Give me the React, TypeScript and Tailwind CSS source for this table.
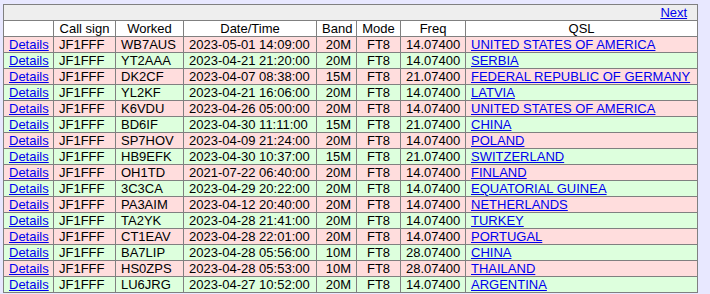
const rows: [string, string, string, string, string][] = [
  ["WB7AUS", "2023-05-01 14:09:00", "20M", "14.07400", "UNITED STATES OF AMERICA"],
  ["YT2AAA", "2023-04-21 21:20:00", "20M", "14.07400", "SERBIA"],
  ["DK2CF", "2023-04-07 08:38:00", "15M", "21.07400", "FEDERAL REPUBLIC OF GERMANY"],
  ["YL2KF", "2023-04-21 16:06:00", "20M", "14.07400", "LATVIA"],
  ["K6VDU", "2023-04-26 05:00:00", "20M", "14.07400", "UNITED STATES OF AMERICA"],
  ["BD6IF", "2023-04-30 11:11:00", "15M", "21.07400", "CHINA"],
  ["SP7HOV", "2023-04-09 21:24:00", "20M", "14.07400", "POLAND"],
  ["HB9EFK", "2023-04-30 10:37:00", "15M", "21.07400", "SWITZERLAND"],
  ["OH1TD", "2021-07-22 06:40:00", "20M", "14.07400", "FINLAND"],
  ["3C3CA", "2023-04-29 20:22:00", "20M", "14.07400", "EQUATORIAL GUINEA"],
  ["PA3AIM", "2023-04-12 20:40:00", "20M", "14.07400", "NETHERLANDS"],
  ["TA2YK", "2023-04-28 21:41:00", "20M", "14.07400", "TURKEY"],
  ["CT1EAV", "2023-04-28 22:01:00", "20M", "14.07400", "PORTUGAL"],
  ["BA7LIP", "2023-04-28 05:56:00", "10M", "28.07400", "CHINA"],
  ["HS0ZPS", "2023-04-28 05:53:00", "10M", "28.07400", "THAILAND"],
  ["LU6JRG", "2023-04-27 10:52:00", "20M", "14.07400", "ARGENTINA"],
];

const td = "border border-[#808080] px-[5px] py-0 whitespace-nowrap";
const link = "text-[#0000ee] underline";

export default function App() {
  return (
    <div className="min-h-[294px] bg-[#e8e8ff] pl-[3px] pt-[4px] font-['Liberation_Sans',Arial,sans-serif] text-[13px] leading-[15px] text-black">
      <table className="w-[694px] table-fixed border-collapse">
        <colgroup>
          <col className="w-[50px]" />
          <col className="w-[62px]" />
          <col className="w-[68px]" />
          <col className="w-[133px]" />
          <col className="w-[40px]" />
          <col className="w-[44px]" />
          <col className="w-[65px]" />
          <col className="w-[232px]" />
        </colgroup>
        <thead>
          <tr className="bg-[#eeeeee]">
            <td colSpan={8} className={`${td} pr-[10px] text-right`}>
              <a href="#" className={link}>Next</a>
            </td>
          </tr>
          <tr className="bg-white">
            <th className={`${td} font-normal`}></th>
            <th className={`${td} font-normal`}>Call sign</th>
            <th className={`${td} font-normal`}>Worked</th>
            <th className={`${td} font-normal`}>Date/Time</th>
            <th className={`${td} font-normal`}>Band</th>
            <th className={`${td} font-normal`}>Mode</th>
            <th className={`${td} font-normal`}>Freq</th>
            <th className={`${td} font-normal`}>QSL</th>
          </tr>
        </thead>
        <tbody>
          {rows.map(([call, date, band, freq, qsl], i) => (
            <tr key={call} className={i % 2 === 0 ? "bg-[#ffdddd]" : "bg-[#ddffdd]"}>
              <td className={td}>
                <a href="#" className={link}>Details</a>
              </td>
              <td className={td}>JF1FFF</td>
              <td className={td}>{call}</td>
              <td className={td}>{date}</td>
              <td className={`${td} text-right`}>{band}</td>
              <td className={`${td} text-center`}>FT8</td>
              <td className={td}>{freq}</td>
              <td className={td}>
                <a href="#" className={link}>{qsl}</a>
              </td>
            </tr>
          ))}
        </tbody>
      </table>
    </div>
  );
}
